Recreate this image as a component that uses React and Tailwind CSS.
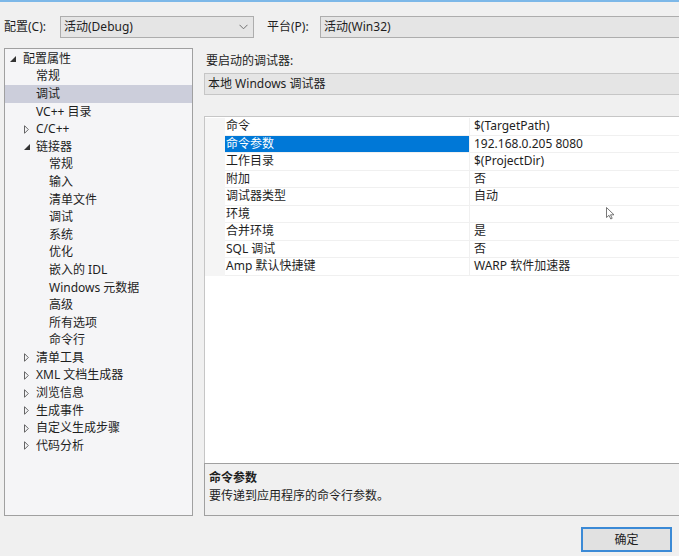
import React from 'react';

const treeItems = [
  { label: '配置属性', level: 0, arrow: 'open' },
  { label: '常规', level: 1 },
  { label: '调试', level: 1, selected: true },
  { label: 'VC++ 目录', level: 1 },
  { label: 'C/C++', level: 1, arrow: 'closed' },
  { label: '链接器', level: 1, arrow: 'open' },
  { label: '常规', level: 2 },
  { label: '输入', level: 2 },
  { label: '清单文件', level: 2 },
  { label: '调试', level: 2 },
  { label: '系统', level: 2 },
  { label: '优化', level: 2 },
  { label: '嵌入的 IDL', level: 2 },
  { label: 'Windows 元数据', level: 2 },
  { label: '高级', level: 2 },
  { label: '所有选项', level: 2 },
  { label: '命令行', level: 2 },
  { label: '清单工具', level: 1, arrow: 'closed' },
  { label: 'XML 文档生成器', level: 1, arrow: 'closed' },
  { label: '浏览信息', level: 1, arrow: 'closed' },
  { label: '生成事件', level: 1, arrow: 'closed' },
  { label: '自定义生成步骤', level: 1, arrow: 'closed' },
  { label: '代码分析', level: 1, arrow: 'closed' },
];

const props = [
  ['命令', '$(TargetPath)'],
  ['命令参数', '192.168.0.205 8080', true],
  ['工作目录', '$(ProjectDir)'],
  ['附加', '否'],
  ['调试器类型', '自动'],
  ['环境', ''],
  ['合并环境', '是'],
  ['SQL 调试', '否'],
  ['Amp 默认快捷键', 'WARP 软件加速器'],
];

const Chevron = () => (
  <svg width="9" height="6" viewBox="0 0 9 6" className="shrink-0">
    <path d="M0.5 0.8 L4.5 4.8 L8.5 0.8" fill="none" stroke="#707070" strokeWidth="1" />
  </svg>
);

const TreeArrow = ({ type }) => {
  if (type === 'open') {
    return (
      <svg width="6" height="6" viewBox="0 0 6 6">
        <path d="M6 0 L6 6 L0 6 Z" fill="#333" />
      </svg>
    );
  }
  return (
    <svg width="5" height="9" viewBox="0 0 5 9">
      <path d="M0.5 0.7 L4.3 4.5 L0.5 8.3 Z" fill="none" stroke="#555" strokeWidth="0.9" />
    </svg>
  );
};

const TreeRow = ({ item }) => {
  const textLeft = item.level === 0 ? 'pl-[18px]' : item.level === 1 ? 'pl-[31px]' : 'pl-[44px]';
  const arrowLeft = item.level === 0 ? 'left-[5px]' : 'left-[19px]';
  return (
    <div
      className={`relative h-[17.6px] flex items-center ${textLeft} ${
        item.selected ? 'bg-[#cccedb]' : ''
      }`}
    >
      {item.arrow && (
        <span className={`absolute ${arrowLeft} top-0 h-full flex items-center`}>
          <TreeArrow type={item.arrow} />
        </span>
      )}
      <span className="leading-none whitespace-nowrap">{item.label}</span>
    </div>
  );
};

export default function App() {
  return (
    <div
      className="relative w-[679px] h-[556px] overflow-hidden bg-[#f0f0f0] text-[12px] text-[#1e1e1e]"
      style={{ fontFamily: '"Noto Sans", "Noto Sans CJK SC", sans-serif' }}
    >
      {/* window top edge */}
      <div className="h-[2px] bg-[#7db8e8]" />

      {/* configuration / platform */}
      <div className="flex items-center h-[22px] mt-[14px] pl-[4px]">
        <span className="w-[56px] leading-none">配置(C):</span>
        <div className="w-[194px] h-[22px] flex items-center justify-between pl-[3px] pr-[5px] bg-[#e5e5e5] border border-[#adadad]">
          <span className="leading-none">活动(Debug)</span>
          <Chevron />
        </div>
        <span className="ml-[13px] w-[53px] leading-none">平台(P):</span>
        <div className="flex-1 h-[22px] flex items-center pl-[3px] bg-[#e5e5e5] border border-[#adadad] border-r-0">
          <span className="leading-none">活动(Win32)</span>
        </div>
      </div>

      {/* main */}
      <div className="flex mt-[10px] h-[468px]">
        {/* tree */}
        <div className="ml-[4px] w-[189px] border border-[#a0a0a0] bg-[#f5f5f7] pt-px">
          {treeItems.map((item, i) => (
            <TreeRow key={i} item={item} />
          ))}
        </div>

        {/* right side */}
        <div className="ml-[11px] flex-1 flex flex-col">
          <div className="h-[25px] flex items-center pl-[2px] leading-none">要启动的调试器:</div>
          <div className="h-[22px] flex items-center pl-[3px] bg-[#e5e5e5] border border-[#c6c6c6] border-r-0">
            <span className="leading-none">本地 Windows 调试器</span>
          </div>

          {/* property grid */}
          <div className="relative mt-[21px] h-[347px] bg-white border border-[#c6c6c6] border-r-0 border-b-0 pt-px">
            {props.map(([name, value, selected], i) => (
              <div key={i} className="flex h-[17.5px]">
                <div className="w-[20px] bg-[#f5f5f5]" />
                <div
                  className={`w-[244px] flex items-center pl-px border-b border-[#f0f0f0] ${
                    selected ? 'bg-[#0078d7] text-white' : ''
                  }`}
                >
                  <span className="leading-none whitespace-nowrap">{name}</span>
                </div>
                <div className="flex-1 flex items-center pl-[4px] border-l border-b border-[#f0f0f0]">
                  <span className="leading-none whitespace-nowrap">{value}</span>
                </div>
              </div>
            ))}
            {/* mouse pointer */}
            <svg
              className="absolute left-[401px] top-[90px]"
              width="9"
              height="13"
              viewBox="0 0 9 13"
            >
              <path
                d="M0.5 0.5 L0.5 10.5 L3 8.3 L4.8 12 L6.2 11.3 L4.5 7.8 L8 7.8 Z"
                fill="#fff"
                stroke="#555"
                strokeWidth="0.8"
              />
            </svg>
          </div>

          {/* description */}
          <div className="h-[53px] bg-[#f0f0f0] border border-[#a0a0a0] border-r-0 pl-[4px] pt-[5px]">
            <div className="font-bold leading-[17px]">命令参数</div>
            <div className="leading-[17px] mt-px">要传递到应用程序的命令行参数。</div>
          </div>
        </div>
      </div>

      {/* buttons */}
      <div className="flex justify-end pr-[7px] mt-[11px]">
        <div className="w-[91px] h-[25px] flex items-center justify-center bg-[#e1e1e1] border-2 border-[#3b8ad6]">
          <span className="leading-none">确定</span>
        </div>
      </div>
    </div>
  );
}
